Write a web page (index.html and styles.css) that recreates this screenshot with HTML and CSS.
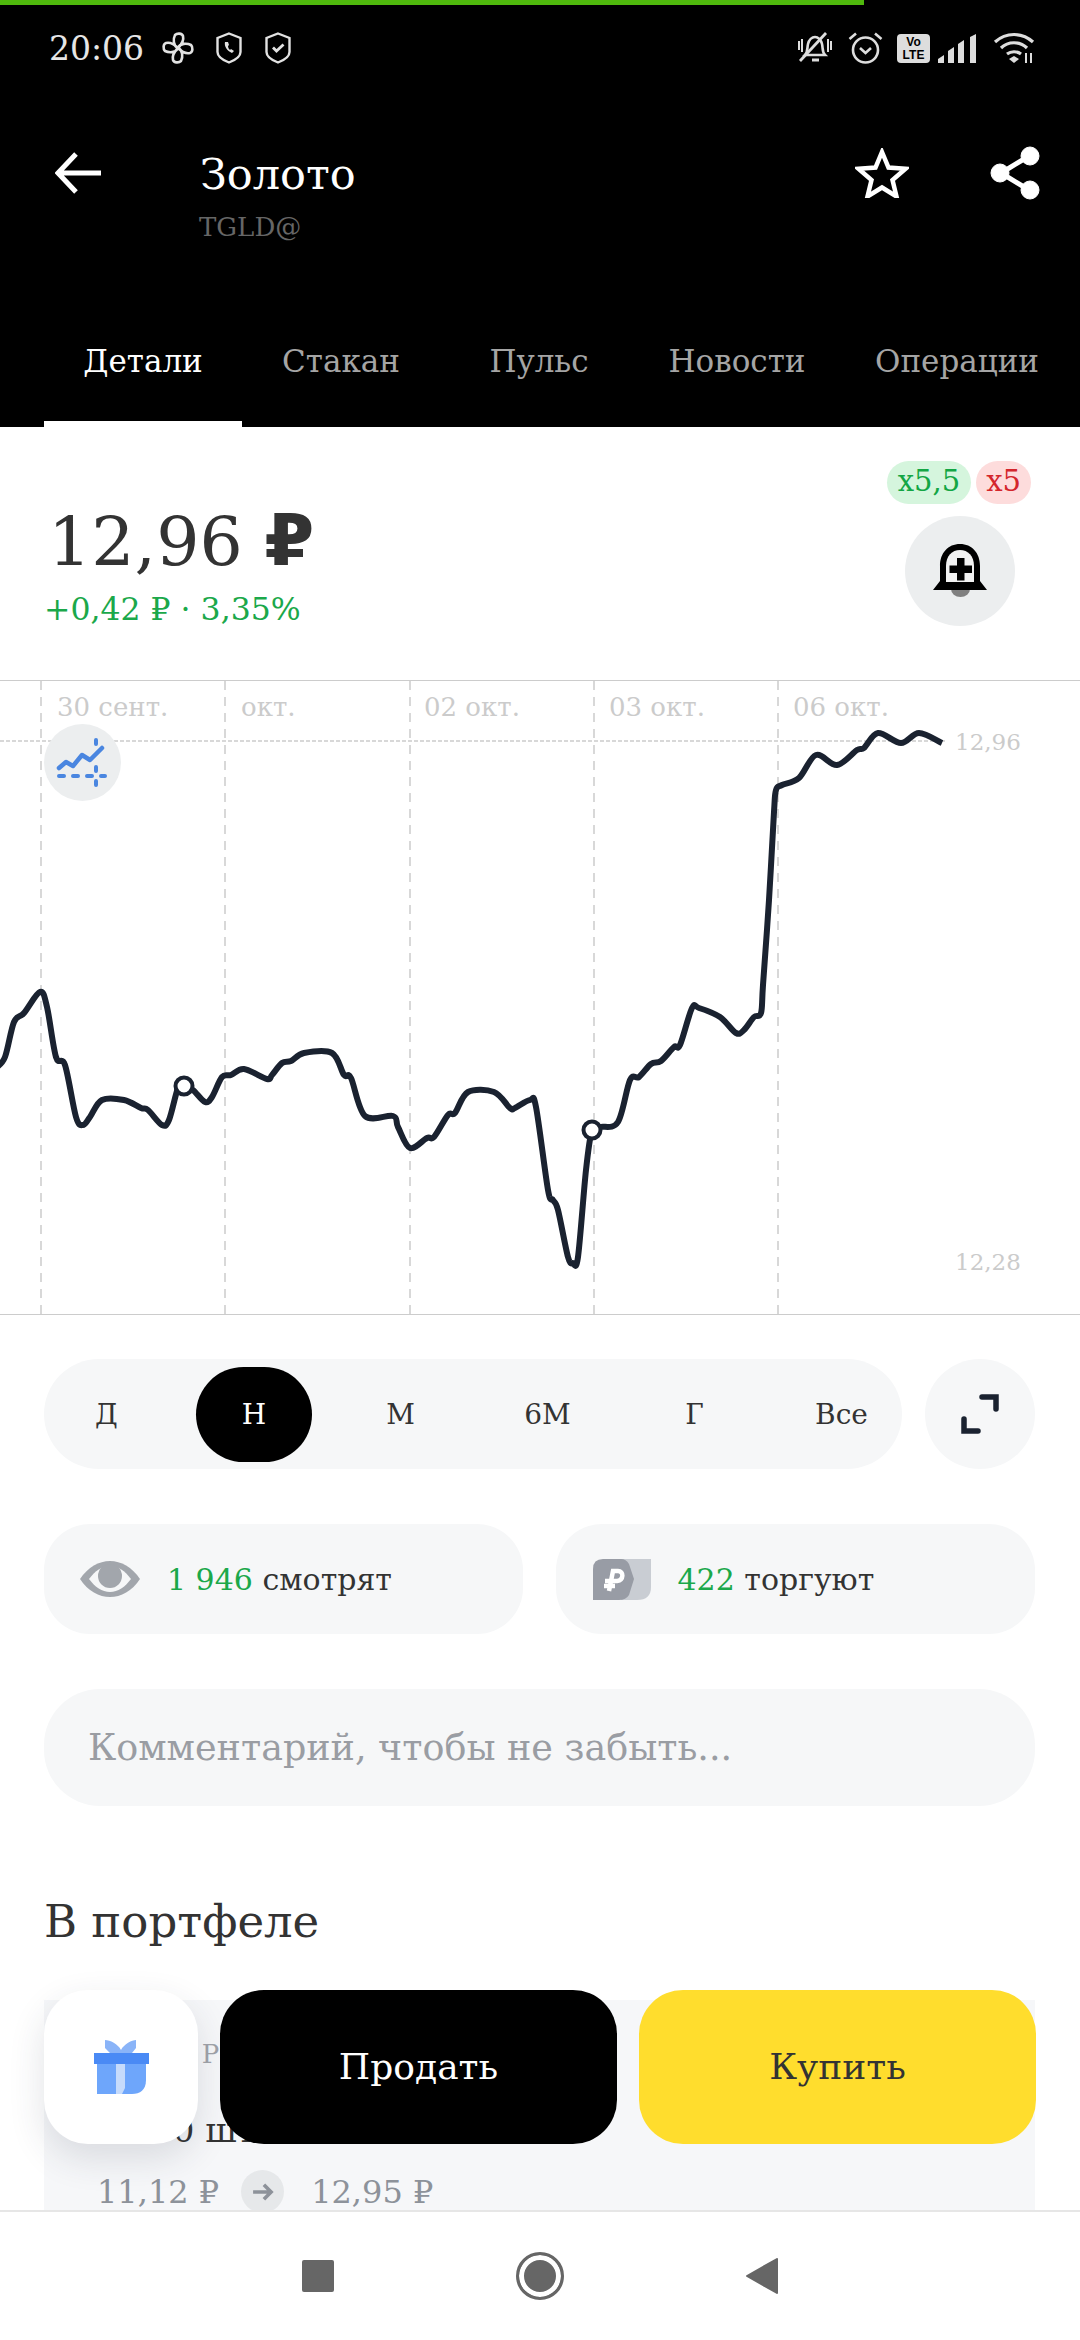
FILE: index.html
```html
<!DOCTYPE html>
<html lang="ru">
  <head>
    <meta charset="utf-8">
    <title>Золото</title>
    <link rel="stylesheet" href="styles.css">
  </head>
  <body>
    <div class="screen">
      <header class="top">
        <div class="progress"></div>
        <div class="status">
          <div class="status-left">
            <span class="time">20:06</span>
            <svg class="st-ic pin" viewBox="0 0 32 32" fill="none" stroke="#e2e2e2" stroke-width="2.6"><path d="M16 16C11 14 11 7 13 3c2-2 7-2 8 1 1 4-2 9-5 12zM16 16c2-5 9-5 13-3 2 2 2 7-1 8-4 1-9-2-12-5zM16 16c5 2 5 9 3 13-2 2-7 2-8-1-1-4 2-9 5-12zM16 16c-2 5-9 5-13 3-2-2-2-7 1-8 4-1 9 2 12 5z"/></svg>
            <svg class="st-ic shield" viewBox="0 0 26 32" fill="none" stroke="#e2e2e2" stroke-width="2.4"><path d="M13 1.5 24.5 6v14c0 4-5 8-11.500 10.500C6.500 28 1.500 24 1.500 20V6z"/><path d="M9 10c-1 4 2 9 7 11l2-2-3-2-1 1c-1-1-2-2-2-4l1-1-1-3z" fill="#e2e2e2" stroke="none"/></svg>
            <svg class="st-ic shield" viewBox="0 0 26 32" fill="none" stroke="#e2e2e2" stroke-width="2.4"><path d="M13 1.500 24.500 6v14c0 4-5 8-11.500 10.500C6.500 28 1.500 24 1.500 20V6z"/><path d="m8 15.500 3.500 3.500L18.500 12.500" stroke-width="2.800"/></svg>
          </div>
          <div class="status-right">
            <svg class="st-ic bell-off" viewBox="0 0 34 32" fill="none" stroke="#ddd" stroke-width="2.600"><path d="M8 22c3-3 2-7 3-11s4-7 7-7 6 3 7 7 0 8 3 11z" transform="translate(-1 1)"/><path d="M14 28h7" stroke-width="3"/><path d="M1 9v9M4 7v13M30 7v13M33 9v9" stroke-width="2"/><path d="M28 1 2 29" stroke-width="2.800"/></svg>
            <svg class="st-ic alarm" viewBox="0 0 35 34" fill="none" stroke="#ddd" stroke-width="2.600"><circle cx="17.500" cy="19" r="12.500"/><path d="m12 17 5.500 5 5.500-5M1.500 8 8 2.500M33.500 8 27 2.500"/></svg>
            <div class="volte"><span>Vo</span><span>LTE</span></div>
            <svg class="st-ic signal" viewBox="0 0 41 29" fill="#ddd"><path d="M0 29v-4l6-4v8zM10 29V17l6-4v16zM20 29V10l6-4v23zM32 29V3l6-3v29z" transform="translate(1 0)"/></svg>
            <svg class="st-ic wifi" viewBox="0 0 42 32" fill="none" stroke="#ddd" stroke-width="3.200"><path d="M2 10c11-10 27-10 38 0M8 16c7-7 19-7 26 0M14 22c4-3 10-3 14 0"/><path d="m16 27 5-3 5 3-5 4z" fill="#ddd" stroke="none"/><path d="M33 21v10M38 21v10" stroke-width="2"/></svg>
          </div>
        </div>
        <div class="toolbar">
          <svg class="back" viewBox="0 0 46 42" fill="none" stroke="#fff" stroke-width="5"><path d="M21 2 3 21l18 19M3 21h43"/></svg>
          <div class="heading">
            <div class="name">Золото</div>
            <div class="ticker">TGLD@</div>
          </div>
          <svg class="star" viewBox="0 0 54 50" fill="none" stroke="#fff" stroke-width="4.500" stroke-linejoin="miter"><path d="m27 4 6.500 15.500 17 1.300-13 11.200 4 16.500L27 39.500 12.500 48.500l4-16.500-13-11.200 17-1.300z"/></svg>
          <svg class="share" viewBox="0 0 50 54" fill="#fff" stroke="#fff"><path d="M39 10 11 27l28 17" fill="none" stroke-width="5"/><circle cx="40" cy="10" r="9"/><circle cx="10" cy="27" r="9"/><circle cx="40" cy="44" r="9"/></svg>
        </div>
        <nav class="tabs">
          <a class="tab tab-active">Детали</a>
          <a class="tab">Стакан</a>
          <a class="tab">Пульс</a>
          <a class="tab">Новости</a>
          <a class="tab tab-last">Операции</a>
        </nav>
      </header>

      <section class="quote">
        <div class="quote-left">
          <div class="price">12,96 <b class="rub">₽</b></div>
          <div class="change">+0,42 ₽ · 3,35%</div>
        </div>
        <div class="quote-right">
          <div class="chips">
            <span class="chip chip-long">x5,5</span>
            <span class="chip chip-short">x5</span>
          </div>
          <div class="bell-btn">
            <svg viewBox="0 0 54 54" width="54" height="54"><path d="M18 45a9.500 8 0 0 0 19 0z" fill="#808080"/><path d="M0 46 7 37V22C7 9 15 0 27 0s20 9 20 22v15l7 9z" fill="#000"/><path d="M13 38V22C13 12 19 6 27 6s14 6 14 16v16z" fill="#f2f2f2"/><path d="M24 14h7.500v7.500H39V29h-7.500v7.500H24V29h-7.500v-7.500H24z" fill="#000"/></svg>
          </div>
        </div>
      </section>

      <section class="chart">
        <svg id="plot" class="plot" viewBox="0 681 1080 633">
          <g class="grid">
            <path d="M41 681v633M225 681v633M410 681v633M594 681v633M778 681v633"/>
            <path d="M0 741h945" class="grid-h"/>
          </g>
          <g class="axis">
            <text x="57" y="716">30 сент.</text>
            <text x="241" y="716">окт.</text>
            <text x="424" y="716">02 окт.</text>
            <text x="609" y="716">03 окт.</text>
            <text x="793" y="716">06 окт.</text>
            <text class="axis-price" x="955" y="750">12,96</text>
            <text class="axis-price" x="955" y="1270">12,28</text>
          </g>
          <path id="line" class="line"/>
          <circle class="mark" cx="184" cy="1086" r="8.500"/>
          <circle class="mark" cx="592" cy="1130" r="8.500"/>
        </svg>
        <div class="forecast">
          <svg viewBox="0 0 77 77" width="77" height="77" fill="none" stroke="#4a86e0" stroke-linecap="round" stroke-linejoin="round"><path d="m15 44 7-6 7 4 9-11 8 5 12-12" stroke-width="4.500"/><path d="M52 16v4M52 43v4M52 57v4M15 52h5M29 52h5M43 52h5M57 52h4" stroke-width="4"/></svg>
        </div>
      </section>

      <section class="controls">
        <div class="range-row">
          <div class="ranges">
            <div class="range-list">
              <span class="range">Д</span>
              <span class="range range-on">Н</span>
              <span class="range">М</span>
              <span class="range">6М</span>
              <span class="range">Г</span>
              <span class="range">Все</span>
            </div>
          </div>
          <div class="expand">
            <svg viewBox="0 0 38 40" width="38" height="40" fill="none" stroke="#1a2230" stroke-width="5.500" stroke-linecap="round"><path d="M21 3h14v12M3 25v12h14"/></svg>
          </div>
        </div>
        <div class="stats">
          <div class="stat">
            <svg viewBox="0 0 60 36" width="60" height="36"><path d="M0 18C8 6 19 0 30 0s22 6 30 18c-8 12-19 18-30 18S8 30 0 18z" fill="#a2a6ac"/><path d="M9 18c6-8 13-13 21-13s15 5 21 13c-6 8-13 13-21 13S15 26 9 18z" fill="#f6f7f8"/><circle cx="30" cy="15" r="12" fill="#a2a6ac"/></svg>
            <span><i class="num">1 946</i> смотрят</span>
          </div>
          <div class="stat stat-trade">
            <svg viewBox="0 0 58 41" width="58" height="41"><path d="M28 0h30v28q0 13-14 13H28z" fill="#c9cdd3"/><path d="M10 0h18q5 0 8 5l5 15-5 16q-3 5-10 5H0V10Q0 0 10 0z" fill="#989ca5"/><path d="M16 32 20 12h5C31 12 31 21 24 22H12M11 27h11" fill="none" stroke="#fff" stroke-width="4.500"/></svg>
            <span><i class="num">422</i> торгуют</span>
          </div>
        </div>
        <div class="comment">Комментарий, чтобы не забыть...</div>
      </section>

      <section class="portfolio">
        <h2 class="section-title">В портфеле</h2>
        <div class="holding">
          <div class="holding-label">ВСЕГО РОС</div>
          <div class="holding-qty">1 100 шт</div>
          <div class="holding-prices">
            <span>11,12 ₽</span>
            <span class="arrow">
              <svg viewBox="0 0 24 20" width="22" height="18" fill="none" stroke="#8d929a" stroke-width="4"><path d="M1 10h20M13 2l8 8-8 8"/></svg>
            </span>
            <span class="price-now">12,95 ₽</span>
          </div>
        </div>
      </section>

      <div class="actions">
        <div class="gift">
          <svg viewBox="0 0 55 54" width="55" height="54"><path d="M11 0c5 0 13 4 16 10 3-6 11-10 15-10v8l-4 5H16l-5-5z" fill="#8ab4f8"/><path d="M3 24h49v16c0 10-6 14-14 14H3z" fill="#6ea6fb"/><path d="M0 13h55v11H0z" fill="#4a8af5"/><path d="M22 24h9v24l-3 6h-6z" fill="#c6dbfb"/></svg>
        </div>
        <div class="trade trade-sell">Продать</div>
        <div class="trade trade-buy">Купить</div>
      </div>

      <footer class="navbar">
        <span class="nav-square"></span>
        <span class="nav-home"></span>
        <svg class="nav-back" viewBox="0 0 32 36" width="32" height="36"><path d="M31 1v34L1 18z" fill="#666" stroke="#666" stroke-width="2" stroke-linejoin="round"/></svg>
      </footer>
    </div>
    <script>
      // points of the price line, in page pixels
      const points = [
        [-4,1068],[5,1057],[14,1022],[24,1013],[40,992],[47,1007],[56,1057],[65,1065],[76,1117],[83,1125],[90,1117],
        [102,1100],[124,1100],[141,1108],[148,1110],[162,1125],[169,1120],[178,1088],[184,1085],[193,1090],[205,1102],
        [212,1097],[222,1077],[231,1075],[244,1069],[267,1079],[272,1075],[282,1063],[291,1061],[304,1053],[332,1053],
        [344,1075],[351,1078],[365,1116],[393,1116],[398,1127],[410,1148],[427,1138],[434,1137],[448,1115],[455,1113],
        [468,1092],[494,1092],[510,1108],[515,1108],[530,1100],[536,1107],[548,1190],[553,1200],[558,1210],[568,1257],
        [573,1263],[578,1257],[586,1170],[592,1130],[600,1127],[618,1122],[630,1080],[639,1077],[651,1064],[661,1061],
        [674,1047],[680,1045],[692,1008],[699,1008],[720,1017],[736,1033],[744,1030],[754,1017],[761,1013],[763,985],
        [769,900],[774,812],[776,790],[782,785],[799,778],[816,755],[837,765],[857,750],[864,748],[878,733],[901,743],
        [919,733],[942,743]
      ];

      function smoothPath(pts) {
        let d = `M${pts[0][0]} ${pts[0][1]}`;
        for (let i = 0; i < pts.length - 1; i++) {
          const p0 = pts[i - 1] || pts[i];
          const p1 = pts[i];
          const p2 = pts[i + 1];
          const p3 = pts[i + 2] || p2;
          const c1x = p1[0] + (p2[0] - p0[0]) / 6;
          const c1y = p1[1] + (p2[1] - p0[1]) / 6;
          const c2x = p2[0] - (p3[0] - p1[0]) / 6;
          const c2y = p2[1] - (p3[1] - p1[1]) / 6;
          d += `C${c1x} ${c1y} ${c2x} ${c2y} ${p2[0]} ${p2[1]}`;
        }
        return d;
      }

      document.getElementById("line").setAttribute("d", smoothPath(points));
    </script>
  </body>
</html>
```

FILE: styles.css
```css
* {
  box-sizing: border-box;
}

html,
body {
  margin: 0;
  background: #fff;
}

.screen {
  position: relative;
  width: 1080px;
  height: 2340px;
  overflow: hidden;
  font-family: "DejaVu Serif", "Liberation Serif", serif;
  color: #333;
}

/* header */
.top {
  height: 427px;
  background: #000;
  color: #fff;
}

.progress {
  width: 864px;
  height: 5px;
  background: #4fb80d;
}

.status {
  display: flex;
  justify-content: space-between;
  align-items: center;
  height: 86px;
  padding: 0 45px 0 49px;
}

.status-left,
.status-right {
  display: flex;
  align-items: center;
}

.time {
  width: 113px;
  font-size: 33px;
  color: #e6e6e6;
}

.st-ic {
  display: block;
}

.pin {
  width: 32px;
  height: 32px;
  margin-right: 22px;
}

.shield {
  width: 26px;
  height: 32px;
  margin-right: 23px;
}

.bell-off {
  width: 34px;
  height: 32px;
  margin-right: 16px;
}

.alarm {
  width: 35px;
  height: 34px;
  margin-right: 14px;
}

.volte {
  display: flex;
  flex-direction: column;
  align-items: center;
  width: 33px;
  height: 29px;
  margin-right: 7px;
  background: #ddd;
  border-radius: 4px;
  color: #000;
  font-family: "Liberation Sans", sans-serif;
  font-size: 12px;
  font-weight: bold;
  line-height: 13px;
  padding-top: 2px;
}

.signal {
  width: 41px;
  height: 29px;
  margin-right: 15px;
}

.wifi {
  width: 42px;
  height: 32px;
}

.toolbar {
  display: flex;
  align-items: flex-start;
  height: 229px;
  padding: 61px 40px 0 55px;
}

.back {
  width: 46px;
  height: 42px;
  margin-right: 99px;
}

.heading {
  flex: 1;
  margin-top: -3px;
}

.name {
  font-size: 43px;
  line-height: 50px;
}

.ticker {
  margin: 13px 0 0 -1px;
  font-size: 26px;
  line-height: 30px;
  color: #666;
}

.star {
  width: 54px;
  height: 50px;
  margin: -4px 81px 0 0;
}

.share {
  width: 50px;
  height: 54px;
  margin-top: -6px;
}

.tabs {
  display: grid;
  grid-template-columns: 198px 198px 198px 198px auto;
  height: 107px;
  padding-left: 44px;
}

.tab {
  text-align: center;
  font-size: 31px;
  line-height: 83px;
  color: #a5a5a5;
  white-space: nowrap;
}

.tab-active {
  color: #fff;
  border-bottom: 6px solid #fff;
}

.tab-last {
  padding-left: 39px;
  text-align: left;
}

/* price */
.quote {
  display: flex;
  justify-content: space-between;
  height: 254px;
  padding: 34px 49px 0 44px;
}

.quote-left {
  padding: 44px 0 0 4px;
}

.price {
  font-size: 68px;
  line-height: 70px;
}

.rub {
  font-family: "DejaVu Sans", sans-serif;
  font-weight: bold;
  font-size: 72px;
}

.change {
  margin: 13px 0 0 -4px;
  font-size: 31.500px;
  line-height: 38px;
  color: #1ba84a;
}

.quote-right {
  display: flex;
  flex-direction: column;
  align-items: flex-end;
}

.chips {
  display: flex;
  gap: 5px;
  margin-bottom: 12px;
}

.chip {
  height: 43px;
  padding: 0 10px;
  border-radius: 22px;
  font-size: 29px;
  line-height: 41px;
}

.chip-long {
  padding: 0 11px;
  background: #d5f5dd;
  color: #13a644;
}

.chip-short {
  background: #fddcdc;
  color: #d4262c;
}

.bell-btn {
  display: flex;
  justify-content: center;
  align-items: center;
  width: 110px;
  height: 110px;
  margin-right: 16px;
  border-radius: 50%;
  background: #eceeef;
}

/* chart */
.chart {
  position: relative;
  height: 634px;
}

.plot {
  display: block;
  width: 1080px;
  height: 633px;
  border-top: 1px solid #ccc;
  border-bottom: 1px solid #ccc;
  box-sizing: content-box;
  margin-top: -1px;
}

.grid path {
  fill: none;
  stroke: #ccc;
  stroke-width: 1.500;
  stroke-dasharray: 9 7;
}

.grid .grid-h {
  stroke-dasharray: 4 2;
}

.axis text {
  font-family: "DejaVu Serif", serif;
  font-size: 26px;
  fill: #cbcbcb;
}

.axis .axis-price {
  font-size: 23px;
}

.line {
  fill: none;
  stroke: #1a2230;
  stroke-width: 6;
  stroke-linejoin: round;
}

.mark {
  fill: #fff;
  stroke: #1a2230;
  stroke-width: 4;
}

.forecast {
  position: absolute;
  left: 44px;
  top: 44px;
  width: 77px;
  height: 77px;
  border-radius: 50%;
  background: #eceeef;
}

.forecast svg {
  display: block;
}

/* period, stats, comment */
.controls {
  padding: 45px 45px 0 44px;
}

.range-row {
  display: flex;
  gap: 23px;
  height: 110px;
}

.ranges {
  display: flex;
  align-items: center;
  flex: 0 0 858px;
  min-width: 0;
  border-radius: 55px;
  background: #f6f7f8;
}

.range-list {
  display: grid;
  flex: none;
  grid-template-columns: repeat(6, 147px);
  margin-left: -11px;
  font-size: 28px;
  text-align: center;
  color: #333;
}

.range {
  height: 95px;
  line-height: 95px;
}

.range-on {
  width: 116px;
  margin-left: 16px;
  border-radius: 48px;
  background: #000;
  color: #fff;
}

.expand {
  display: flex;
  flex: 0 0 110px;
  justify-content: center;
  align-items: center;
  border-radius: 50%;
  background: #f6f7f8;
}

.stats {
  display: flex;
  gap: 33px;
  margin-top: 55px;
}

.stat {
  display: flex;
  align-items: center;
  gap: 27px;
  flex: 1;
  height: 110px;
  padding-left: 36px;
  border-radius: 46px;
  background: #f6f7f8;
  font-size: 30px;
  color: #333;
}

.stat-trade {
  padding-left: 37px;
}

.num {
  font-style: normal;
  color: #1ba84a;
}

.comment {
  height: 117px;
  margin-top: 55px;
  padding-left: 44px;
  border-radius: 56px;
  background: #f6f7f8;
  font-size: 36.500px;
  line-height: 117px;
  color: #9a9da3;
}

/* portfolio */
.portfolio {
  padding: 86px 45px 0 44px;
}

.section-title {
  margin: 0;
  font-size: 45px;
  font-weight: normal;
  line-height: 60px;
}

.holding {
  height: 230px;
  margin-top: 48px;
  padding: 34px 0 0 53px;
  background: #f6f7f9;
  font-size: 32px;
}

.holding-label {
  font-size: 26px;
  line-height: 40px;
  color: #a0a3a9;
}

.holding-qty {
  margin-top: 36px;
  font-size: 34px;
  line-height: 40px;
  color: #333;
}

.holding-prices {
  display: flex;
  align-items: center;
  gap: 22px;
  margin-top: 20px;
  color: #8d929a;
}

.price-now {
  margin-left: 5px;
}

.arrow {
  display: flex;
  justify-content: center;
  align-items: center;
  width: 43px;
  height: 43px;
  border-radius: 50%;
  background: #e6e8ea;
}

/* floating buttons */
.actions {
  position: absolute;
  left: 44px;
  top: 1990px;
  display: flex;
  gap: 22px;
}

.gift {
  display: flex;
  justify-content: center;
  align-items: center;
  width: 154px;
  height: 154px;
  border-radius: 44px;
  background: #fff;
  box-shadow: 0 14px 36px rgba(40, 50, 70, 0.14);
}

.trade {
  width: 397px;
  height: 154px;
  border-radius: 44px;
  text-align: center;
  font-size: 36px;
  line-height: 154px;
}

.trade-sell {
  background: #000;
  color: #fff;
}

.trade-buy {
  background: #ffdd2d;
  color: #333;
}

/* android nav */
.navbar {
  position: absolute;
  left: 0;
  right: 0;
  top: 2210px;
  display: flex;
  justify-content: center;
  align-items: center;
  gap: 182px;
  height: 130px;
  border-top: 2px solid #e6e6e6;
  background: #fff;
}

.nav-square {
  width: 32px;
  height: 32px;
  background: #666;
  border-radius: 2px;
}

.nav-home {
  width: 48px;
  height: 48px;
  border: 3px solid #666;
  border-radius: 50%;
  background: #666;
  box-shadow: inset 0 0 0 5px #fff;
}

.nav-back {
  display: block;
}
```
